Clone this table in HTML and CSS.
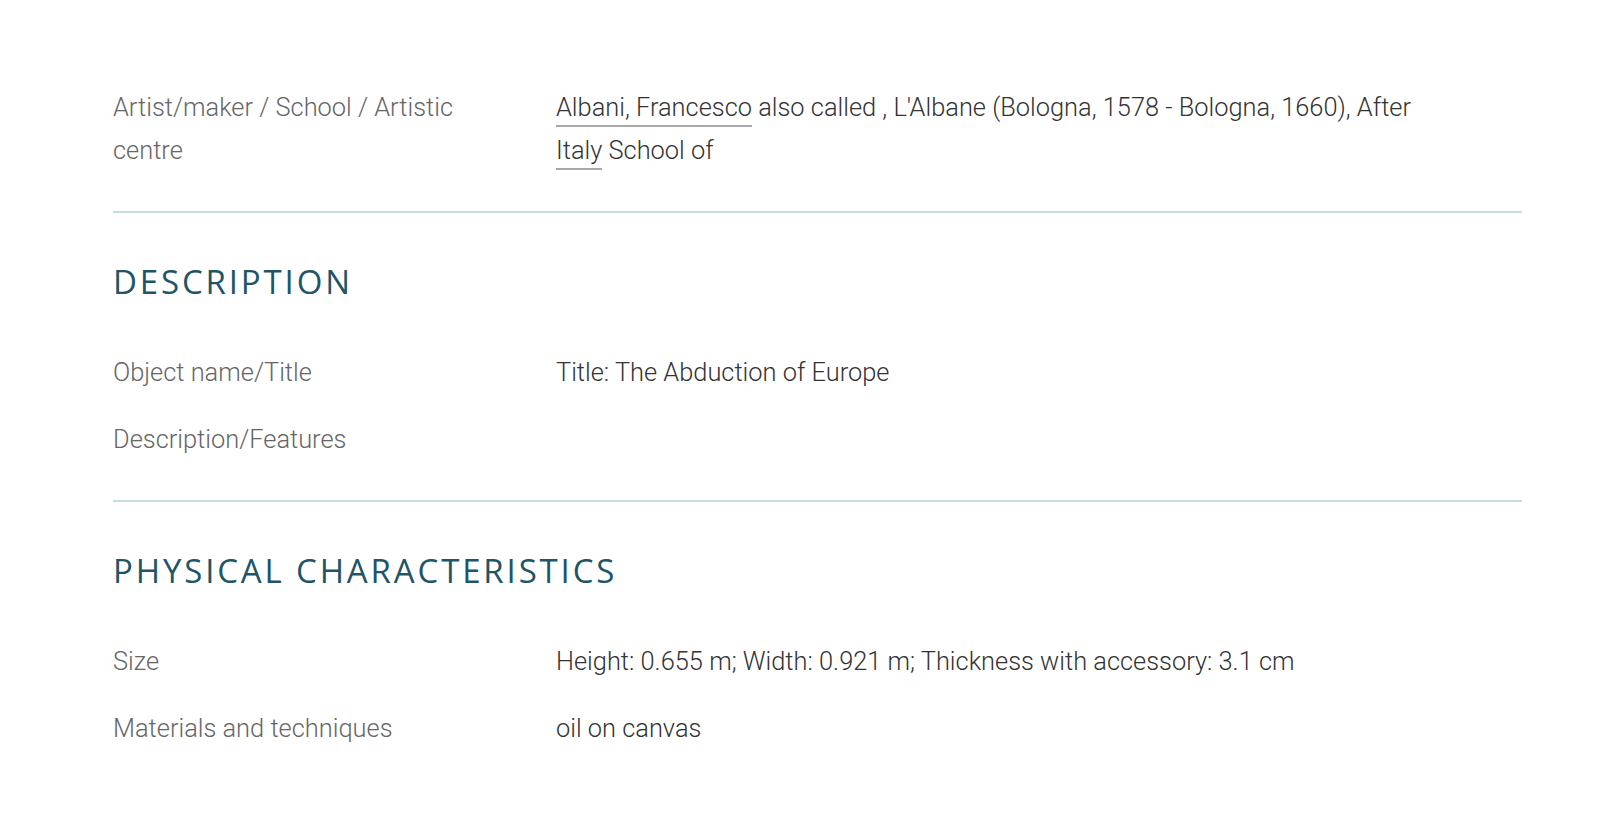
FILE: index.html
```html
<!DOCTYPE html>
<html lang="en">
<head>
<meta charset="utf-8">
<title>Notice</title>
<link rel="stylesheet" href="styles.css">
</head>
<body>
<main class="notice">
  <section class="block block-first">
    <div class="row">
      <div class="label">Artist/maker / School / Artistic centre</div>
      <div class="value"><a class="link" href="#">Albani, Francesco</a> also called , L'Albane (Bologna, 1578 - Bologna, 1660), After <a class="link" href="#">Italy</a> School of</div>
    </div>
  </section>
  <section class="block">
    <h2 class="heading">DESCRIPTION</h2>
    <div class="row">
      <div class="label">Object name/Title</div>
      <div class="value">Title: The Abduction of Europe</div>
    </div>
    <div class="row">
      <div class="label">Description/Features</div>
      <div class="value"></div>
    </div>
  </section>
  <section class="block block-last">
    <h2 class="heading">PHYSICAL CHARACTERISTICS</h2>
    <div class="row">
      <div class="label">Size</div>
      <div class="value">Height: 0.655 m; Width: 0.921 m; Thickness with accessory: 3.1 cm</div>
    </div>
    <div class="row">
      <div class="label">Materials and techniques</div>
      <div class="value">oil on canvas</div>
    </div>
  </section>
</main>
</body>
</html>
```

FILE: styles.css
```css
html, body {
  margin: 0;
  padding: 0;
  background: #ffffff;
}

body {
  font-family: Roboto, "Liberation Sans", sans-serif;
  font-weight: 300;
  font-size: 25.4px;
  line-height: 43px;
  color: #333333;
}

.notice {
  width: 1409px;
  margin-left: 113px;
  padding-top: 86px;
}

.block {
  border-bottom: 2px solid #c8dbe0;
  padding-bottom: 39px;
}

.block-last {
  border-bottom: none;
}

.block-first {
  padding-bottom: 39px;
}

.heading {
  margin: 0;
  padding-top: 49px;
  padding-bottom: 49px;
  font-family: "Open Sans", "DejaVu Sans", sans-serif;
  font-weight: 400;
  font-size: 33px;
  line-height: 40px;
  letter-spacing: 2.85px;
  color: #1f5566;
}

.row {
  display: flex;
  margin-bottom: 24px;
}

.row:last-child {
  margin-bottom: 0;
}

.label {
  width: 390px;
  flex: 0 0 390px;
  margin-right: 53px;
  color: #666666;
}

.value {
  flex: 1 1 auto;
  max-width: 870px;
  color: #333333;
}

.link {
  color: #333333;
  text-decoration: none;
  border-bottom: 2px solid #a8a8a8;
  padding-bottom: 3px;
}
```
